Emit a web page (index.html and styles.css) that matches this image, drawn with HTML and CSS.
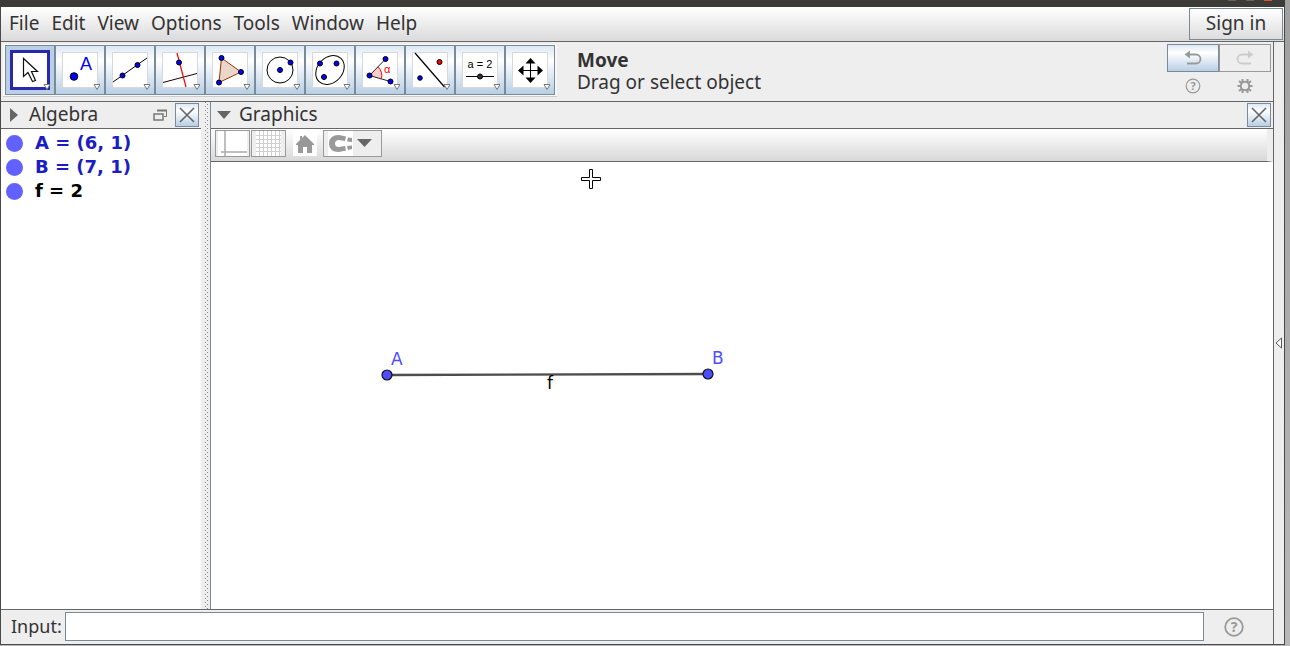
FILE: index.html
```html
<!DOCTYPE html>
<html lang="en">
<head>
    <meta charset="UTF-8">
    <meta name="viewport" content="width=device-width, initial-scale=1.0">
    <title>GeoGebra</title>
    <link rel="stylesheet" href="styles.css">
</head>
<body>
    <div class="titlebar">
        <span class="title-dot"></span>
        <span class="title-dot"></span>
        <span class="title-dot close"></span>
    </div>
    <div class="window">
        <header class="menubar">
            <nav class="menu">
                <button type="button">File</button>
                <button type="button">Edit</button>
                <button type="button">View</button>
                <button type="button">Options</button>
                <button type="button">Tools</button>
                <button type="button">Window</button>
                <button type="button">Help</button>
            </nav>
            <button type="button" class="sign-in">Sign in</button>
        </header>

        <div class="workspace">
            <div class="main">
                <div class="toolbar">
                    <div class="tools">
                        <button type="button" class="tool active" aria-label="Move">
                            <svg width="40" height="40" viewBox="0 0 40 40">
                                <rect x="1.5" y="1.5" width="37" height="37" fill="#fff" stroke="#2828a8" stroke-width="3"/>
                                <path d="M13.5 8.5V26.5L18 22.5L22.5 31.5L25.5 30.5L21.5 21.5H27.5Z" fill="#fff" stroke="#111" stroke-width="1.2"/>
                                <path d="M34 34.5H40L37 39.5Z" fill="#fff" stroke="#777"/>
                            </svg>
                        </button>
                        <button type="button" class="tool" aria-label="Point">
                            <svg width="40" height="40" viewBox="0 0 40 40">
                                <rect x="2.5" y="2.5" width="35" height="35" fill="#fff" stroke="#d8d8d8"/>
                                <circle cx="14" cy="26.5" r="3.8" fill="#00f" stroke="#000"/>
                                <text x="20" y="20" class="tool-point">A</text>
                                <path d="M34 34.5H40L37 39.5Z" fill="#fff" stroke="#777"/>
                            </svg>
                        </button>
                        <button type="button" class="tool" aria-label="Line">
                            <svg width="40" height="40" viewBox="0 0 40 40">
                                <rect x="2.5" y="2.5" width="35" height="35" fill="#fff" stroke="#d8d8d8"/>
                                <path d="M3 32L37 8" stroke="#000"/>
                                <circle cx="12.5" cy="25.5" r="2.5" fill="#00f" stroke="#000"/>
                                <circle cx="27.5" cy="15" r="2.5" fill="#00f" stroke="#000"/>
                                <path d="M34 34.5H40L37 39.5Z" fill="#fff" stroke="#777"/>
                            </svg>
                        </button>
                        <button type="button" class="tool" aria-label="Perpendicular Line">
                            <svg width="40" height="40" viewBox="0 0 40 40">
                                <rect x="2.5" y="2.5" width="35" height="35" fill="#fff" stroke="#d8d8d8"/>
                                <path d="M3 32.5L37 23.5" stroke="#200"/>
                                <path d="M17 3L26 37" stroke="#f00" stroke-width="1.2"/>
                                <circle cx="19" cy="12.5" r="2.5" fill="#00f" stroke="#000"/>
                                <path d="M34 34.5H40L37 39.5Z" fill="#fff" stroke="#777"/>
                            </svg>
                        </button>
                        <button type="button" class="tool" aria-label="Polygon">
                            <svg width="40" height="40" viewBox="0 0 40 40">
                                <rect x="2.5" y="2.5" width="35" height="35" fill="#fff" stroke="#d8d8d8"/>
                                <path d="M11.5 8L31 22L9 32.5Z" fill="#ebd6cc" stroke="#993300"/>
                                <circle cx="11.5" cy="8" r="2.5" fill="#00f" stroke="#000"/>
                                <circle cx="31" cy="22" r="2.5" fill="#00f" stroke="#000"/>
                                <circle cx="9" cy="32.5" r="2.5" fill="#00f" stroke="#000"/>
                                <path d="M34 34.5H40L37 39.5Z" fill="#fff" stroke="#777"/>
                            </svg>
                        </button>
                        <button type="button" class="tool" aria-label="Circle with Center through Point">
                            <svg width="40" height="40" viewBox="0 0 40 40">
                                <rect x="2.5" y="2.5" width="35" height="35" fill="#fff" stroke="#d8d8d8"/>
                                <circle cx="20" cy="20" r="13" fill="none" stroke="#000"/>
                                <circle cx="20" cy="20" r="2.5" fill="#00f" stroke="#000"/>
                                <circle cx="30.5" cy="12.5" r="2.5" fill="#00f" stroke="#000"/>
                                <path d="M34 34.5H40L37 39.5Z" fill="#fff" stroke="#777"/>
                            </svg>
                        </button>
                        <button type="button" class="tool" aria-label="Ellipse">
                            <svg width="40" height="40" viewBox="0 0 40 40">
                                <rect x="2.5" y="2.5" width="35" height="35" fill="#fff" stroke="#d8d8d8"/>
                                <ellipse cx="20" cy="20" rx="16" ry="12.5" transform="rotate(-47 20 20)" fill="none" stroke="#000"/>
                                <circle cx="10" cy="13.5" r="2.5" fill="#00f" stroke="#000"/>
                                <circle cx="26.5" cy="13.5" r="2.5" fill="#00f" stroke="#000"/>
                                <circle cx="14" cy="27" r="2.5" fill="#00f" stroke="#000"/>
                                <path d="M34 34.5H40L37 39.5Z" fill="#fff" stroke="#777"/>
                            </svg>
                        </button>
                        <button type="button" class="tool" aria-label="Angle">
                            <svg width="40" height="40" viewBox="0 0 40 40">
                                <rect x="2.5" y="2.5" width="35" height="35" fill="#fff" stroke="#d8d8d8"/>
                                <path d="M9.5 25.5L18 17A12 12 0 0 1 21.5 28.5Z" fill="#fcc"/>
                                <path d="M18 17A12 12 0 0 1 21.5 28.5" fill="none" stroke="#f00"/>
                                <path d="M25.5 9L9.5 25.5L30.5 31.5" fill="none" stroke="#222"/>
                                <circle cx="25.5" cy="9" r="2.5" fill="#00f" stroke="#000"/>
                                <circle cx="9.5" cy="25.5" r="2.5" fill="#00f" stroke="#000"/>
                                <circle cx="30.5" cy="31.5" r="2.5" fill="#00f" stroke="#000"/>
                                <text x="24" y="23" class="tool-angle">α</text>
                                <path d="M34 34.5H40L37 39.5Z" fill="#fff" stroke="#777"/>
                            </svg>
                        </button>
                        <button type="button" class="tool" aria-label="Reflect about Line">
                            <svg width="40" height="40" viewBox="0 0 40 40">
                                <rect x="2.5" y="2.5" width="35" height="35" fill="#fff" stroke="#d8d8d8"/>
                                <path d="M5 3L34.5 37" stroke="#000" stroke-width="1.2"/>
                                <circle cx="10" cy="28" r="2.3" fill="#00f" stroke="#000"/>
                                <circle cx="29.5" cy="12" r="2.5" fill="#f00" stroke="#000"/>
                                <path d="M34 34.5H40L37 39.5Z" fill="#fff" stroke="#777"/>
                            </svg>
                        </button>
                        <button type="button" class="tool" aria-label="Slider">
                            <svg width="40" height="40" viewBox="0 0 40 40">
                                <rect x="2.5" y="2.5" width="35" height="35" fill="#fff" stroke="#d8d8d8"/>
                                <text x="20" y="18" class="tool-slider">a = 2</text>
                                <path d="M6 26.5H34" stroke="#000"/>
                                <circle cx="20" cy="26.5" r="2.5" fill="#333" stroke="#000"/>
                                <path d="M34 34.5H40L37 39.5Z" fill="#fff" stroke="#777"/>
                            </svg>
                        </button>
                        <button type="button" class="tool" aria-label="Move Graphics View">
                            <svg width="40" height="40" viewBox="0 0 40 40">
                                <rect x="2.5" y="2.5" width="35" height="35" fill="#fff" stroke="#d8d8d8"/>
                                <path d="M20.5 11V30M11 20.5H30" stroke="#000"/>
                                <path d="M20.5 8L25.5 13.5H15.5ZM20.5 33L25.5 27.5H15.5ZM8 20.5L13.5 15.5V25.500ZM33 20.5L27.5 15.5V25.5Z" fill="#000"/>
                                <path d="M34 34.5H40L37 39.5Z" fill="#fff" stroke="#777"/>
                            </svg>
                        </button>
                    </div>
                    <div class="tool-help">
                        <strong>Move</strong>
                        <span>Drag or select object</span>
                    </div>
                    <div class="actions">
                        <button type="button" class="action undo" aria-label="Undo">
                            <svg width="20" height="16" viewBox="0 0 20 16"><path d="M4 4.5H13A4.5 4.5 0 0 1 13 13.5H4" fill="none" stroke="#999" stroke-width="1.8"/><path d="M1.5 4.5L7 0.5V8.5Z" fill="#999"/></svg>
                        </button>
                        <button type="button" class="action redo" aria-label="Redo" disabled>
                            <svg width="20" height="16" viewBox="0 0 20 16"><path d="M16 4.5H7A4.5 4.5 0 0 0 7 13.5H16" fill="none" stroke="#ccc" stroke-width="1.8"/><path d="M18.5 4.5L13 0.5V8.5Z" fill="#ccc"/></svg>
                        </button>
                        <button type="button" class="plain" aria-label="Help">
                            <svg width="16" height="16" viewBox="0 0 16 16"><circle cx="8" cy="8" r="6.8" fill="none" stroke="#999" stroke-width="1.2"/><text x="8" y="12" class="help-mark">?</text></svg>
                        </button>
                        <button type="button" class="plain" aria-label="Settings">
                            <svg width="16" height="16" viewBox="0 0 16 16"><circle cx="8" cy="8" r="4.2" fill="none" stroke="#999" stroke-width="2"/><path d="M5.500 1V4M10.500 1V4M5.500 12V15M10.500 12V15M0.500 8H4M12 8H15.500M2 3L5 5.500M11 10.500L14 13M2 13L5 10.500M11 5.500L14 3" stroke="#999" stroke-width="2"/></svg>
                        </button>
                    </div>
                </div>

                <div class="views">
                    <section class="algebra">
                        <div class="view-header">
                            <svg class="arrow" width="10" height="14" viewBox="0 0 10 14"><path d="M1 0L9 7L1 14Z" fill="#666"/></svg>
                            <h2>Algebra</h2>
                            <button type="button" class="plain undock" aria-label="Undock">
                                <svg width="14" height="12" viewBox="0 0 14 12"><path d="M4 1.5H13.5V7.5H11" fill="none" stroke="#777"/><path d="M4 1.5H14" stroke="#777" stroke-width="2"/><rect x="1" y="5" width="9" height="6" fill="#eee" stroke="#777" stroke-width="1.5"/></svg>
                            </button>
                            <button type="button" class="close-view" aria-label="Close Algebra">
                                <svg width="16" height="16" viewBox="0 0 16 16"><path d="M1 1L15 15M15 1L1 15" stroke="#666" stroke-width="1.6"/></svg>
                            </button>
                        </div>
                        <ul class="objects">
                            <li><span class="marble"></span>A = (6, 1)</li>
                            <li><span class="marble"></span>B = (7, 1)</li>
                            <li class="number"><span class="marble"></span>f = 2</li>
                        </ul>
                    </section>
                    <div class="divider"></div>
                    <section class="graphics">
                        <div class="view-header">
                            <svg class="arrow" width="14" height="8" viewBox="0 0 14 8"><path d="M0 0H14L7 8Z" fill="#666"/></svg>
                            <h2>Graphics</h2>
                            <button type="button" class="close-view" aria-label="Close Graphics">
                                <svg width="16" height="16" viewBox="0 0 16 16"><path d="M1 1L15 15M15 1L1 15" stroke="#666" stroke-width="1.6"/></svg>
                            </button>
                        </div>
                        <div class="stylebar">
                            <button type="button" class="style-button" aria-label="Show Axes">
                                <svg width="29" height="25" viewBox="0 0 29 25"><path d="M0 0H29V25H0Z" fill="#fff"/><path d="M7 0V25M3 21H29" stroke="#aaa" stroke-width="1.5"/></svg>
                            </button>
                            <button type="button" class="style-button" aria-label="Show Grid">
                                <svg width="25" height="25" viewBox="0 0 25 25"><path d="M0 0H25V25H0Z" fill="#fff"/><path d="M3.5 0V25M7.5 0V25M11.5 0V25M15.5 0V25M19.5 0V25M23.5 0V25M0 4.5H25M0 8.5H25M0 12.5H25M0 16.5H25M0 20.5H25" stroke="#d0d0d0"/></svg>
                            </button>
                            <button type="button" class="plain home" aria-label="Standard View">
                                <svg width="24" height="24" viewBox="0 0 24 24"><path d="M12 3L21 12V13H19V21H14V15H10V21H5V13H3V12L7 8V4H9V6Z" fill="#999"/></svg>
                            </button>
                            <button type="button" class="style-button snap" aria-label="Point Capturing">
                                <svg width="50" height="25" viewBox="0 0 50 25"><path d="M0 0H25V25H0Z" fill="#fff"/><path d="M18 5.5L11 4Q1 4 1 12.500Q1 21 11 21L18 19.500L17 15L11 16Q7 16 7 12.500Q7 9 11 9L17 10Z" fill="#999"/><path d="M20 6.500L24 7V11L19 10.500ZM19 15L24 14.500V18L20 19Z" fill="#999"/><path d="M29 8H44L36.500 16Z" fill="#666"/></svg>
                            </button>
                        </div>
                        <div class="canvas">
                            <svg width="100%" height="100%">
                                <path d="M177 213L497 212" stroke="#4d4d4d" stroke-width="2.4"/>
                                <circle cx="176" cy="213" r="5" fill="#4d4dff" stroke="#111" stroke-width="1.2"/>
                                <circle cx="497" cy="212" r="5" fill="#4d4dff" stroke="#111" stroke-width="1.2"/>
                                <text x="180" y="203" class="point-label">A</text>
                                <text x="501" y="202" class="point-label">B</text>
                                <text x="336" y="227" class="segment-label">f</text>
                                <path d="M378.5 7.5H381.5V15.5H389.5V18.5H381.5V26.5H378.5V18.5H370.5V15.5H378.5Z" fill="#fff" stroke="#000"/>
                            </svg>
                        </div>
                    </section>
                </div>

                <div class="inputbar">
                    <label for="command">Input:</label>
                    <input type="text" id="command">
                    <button type="button" class="plain" aria-label="Input Help">
                        <svg width="20" height="20" viewBox="0 0 20 20"><circle cx="10" cy="10" r="8.8" fill="none" stroke="#999" stroke-width="1.8"/><text x="10" y="15" class="help-mark large">?</text></svg>
                    </button>
                </div>
            </div>
            <button type="button" class="sidebar" aria-label="Show Perspectives">
                <svg width="7" height="12" viewBox="0 0 7 12"><path d="M6.5 1V11L1 6Z" fill="#fff" stroke="#555"/></svg>
            </button>
        </div>
    </div>
</body>
</html>
```
FILE: styles.css
```css
* {
    box-sizing: border-box;
}

body {
    margin: 0;
    height: 100vh;
    display: flex;
    flex-direction: column;
    background: linear-gradient(#a0a0a0, #b8b8b8);
    color: #333333;
    font-family: "Noto Sans", sans-serif;
    font-size: 19px;
    line-height: 24px;
    overflow: hidden;
}

button {
    margin: 0;
    padding: 0;
    border: none;
    background: none;
    color: inherit;
    font: inherit;
}

svg {
    display: block;
    flex: none;
}

.titlebar {
    flex: none;
    display: flex;
    justify-content: flex-end;
    align-items: flex-start;
    gap: 10px;
    height: 7px;
    margin-right: 5px;
    padding-right: 13px;
    background: #3c3b37;
}

.title-dot {
    width: 8px;
    height: 1px;
    background: #66645e;
}

.title-dot.close {
    background: #e0532a;
}

.window {
    flex: 1;
    min-height: 0;
    display: flex;
    flex-direction: column;
    margin: 0 5px 1px 0;
    border: 1px solid #4a4848;
    border-top: none;
    background: #eeeeee;
}

/* Menu bar */
.menubar {
    display: flex;
    justify-content: space-between;
    height: 35px;
    padding: 1px 1px 1px 8px;
    border-bottom: 1px solid #666666;
    background: linear-gradient(#ffffff, #dadada);
}

.menu {
    display: flex;
    align-items: center;
    gap: 12px;
    padding-bottom: 2px;
}

.sign-in {
    width: 94px;
    padding-bottom: 2px;
    border: 1px solid #7a8a99;
    background: linear-gradient(#ffffff, #dddddd);
}

.workspace {
    flex: 1;
    min-height: 0;
    display: flex;
}

.main {
    flex: 1;
    min-width: 0;
    display: flex;
    flex-direction: column;
}

.sidebar {
    display: flex;
    align-items: center;
    justify-content: flex-start;
    width: 11px;
    padding-left: 1px;
    border-left: 1px solid #666666;
}

/* Toolbar */
.toolbar {
    display: flex;
    height: 60px;
    padding: 2px;
    border-bottom: 1px solid #666666;
}

.tools {
    display: flex;
    align-self: flex-start;
    padding: 1px 2px;
    background: #f8f8f8;
    border-bottom: 1px solid #cccccc;
}

.tool {
    display: flex;
    align-items: center;
    justify-content: center;
    width: 50px;
    height: 50px;
    border: 1px solid #7a8a99;
    background: linear-gradient(#dde8f3, #ffffff 30%, #b8cfe5);
}

.tool.active {
    background: #b8cfe5;
}

.tool-point {
    fill: #0000ff;
    font: 18px "Liberation Sans", sans-serif;
}

.tool-angle {
    fill: #ff0000;
    font: 11px "Liberation Sans", sans-serif;
}

.tool-slider {
    fill: #000000;
    font: 11px "Liberation Sans", sans-serif;
    text-anchor: middle;
}

.tool-help {
    display: flex;
    flex-direction: column;
    justify-content: center;
    margin-left: 20px;
    padding-bottom: 2px;
    line-height: 22px;
}

.actions {
    display: grid;
    grid-template-columns: 52px 52px;
    grid-template-rows: 28px 28px;
    justify-items: center;
    align-items: center;
    margin-left: auto;
}

.action {
    display: flex;
    align-items: center;
    justify-content: center;
    width: 52px;
    height: 28px;
    border: 1px solid #7a8a99;
}

.undo {
    background: linear-gradient(#dde8f3, #ffffff 30%, #b8cfe5);
}

.redo {
    border-color: #999999;
}

.help-mark {
    fill: #999999;
    font: bold 11px "Noto Sans", sans-serif;
    text-anchor: middle;
}

.help-mark.large {
    font-size: 14px;
}

/* Views */
.views {
    flex: 1;
    min-height: 0;
    display: flex;
    border-bottom: 1px solid #666666;
}

.algebra {
    width: 200px;
    background: #ffffff;
}

.divider {
    display: flex;
    justify-content: center;
    gap: 1px;
    width: 9px;
    padding-left: 2px;
    background: #eeeeee;
}

.divider::before,
.divider::after {
    content: "";
    width: 1px;
    background: repeating-linear-gradient(#888888 0 1px, transparent 1px 4px);
}

.divider::after {
    margin-top: 2px;
}

.graphics {
    flex: 1;
    min-width: 0;
    display: flex;
    flex-direction: column;
    border-left: 1px solid #7a8a99;
    background: #ffffff;
}

.view-header {
    display: flex;
    align-items: center;
    height: 27px;
    padding: 0 2px 0 6px;
    border-bottom: 1px solid #666666;
    background: #eeeeee;
}

.view-header h2 {
    margin: 0 auto 0 8px;
    padding-bottom: 2px;
    font-size: 19px;
    font-weight: normal;
}

.algebra .arrow {
    margin: 0 2px;
}

.undock {
    margin-right: 8px;
}

.close-view {
    display: flex;
    align-items: center;
    justify-content: center;
    width: 24px;
    height: 24px;
    border: 1px solid #7a8a99;
    background: linear-gradient(#dde8f3, #ffffff 30%, #b8cfe5);
}

.objects {
    margin: 0;
    padding: 2px 0 0 5px;
    list-style: none;
    color: #1c1cc4;
    font: bold 18px/24px "DejaVu Sans", sans-serif;
}

.objects li {
    display: flex;
    align-items: center;
    gap: 12px;
}

.objects .number {
    color: #000000;
}

.marble {
    width: 17px;
    height: 17px;
    border-radius: 50%;
    background: #6161ff;
}

.stylebar {
    display: flex;
    align-items: center;
    gap: 1px;
    height: 33px;
    padding: 0 4px 3px;
    border-bottom: 1px solid #666666;
    background: linear-gradient(#ffffff, #d8d8d8);
    border-right: 6px solid #eeeeee;
}

.style-button {
    display: flex;
    align-items: center;
    justify-content: center;
    width: 35px;
    height: 27px;
    border: 1px solid #999999;
    background: #eeeeee;
}

.home {
    margin: 0 5px 0 6px;
    background: #ffffff;
}

.snap {
    width: 59px;
}

.canvas {
    flex: 1;
    min-height: 0;
}

.point-label {
    fill: #4d4dff;
    font: 17px "DejaVu Sans", sans-serif;
}

.segment-label {
    fill: #000000;
    font: 17px "DejaVu Sans", sans-serif;
}

/* Input bar */
.inputbar {
    display: flex;
    align-items: center;
    height: 34px;
    padding: 2px 29px 3px 10px;
}

.inputbar label {
    margin-right: 3px;
    padding-bottom: 1px;
    font-size: 18px;
}

.inputbar input {
    flex: 1;
    min-width: 0;
    height: 29px;
    margin-right: 20px;
    padding: 0 4px;
    border: 1px solid #7a8a99;
    background: #ffffff;
    font: inherit;
}
```
